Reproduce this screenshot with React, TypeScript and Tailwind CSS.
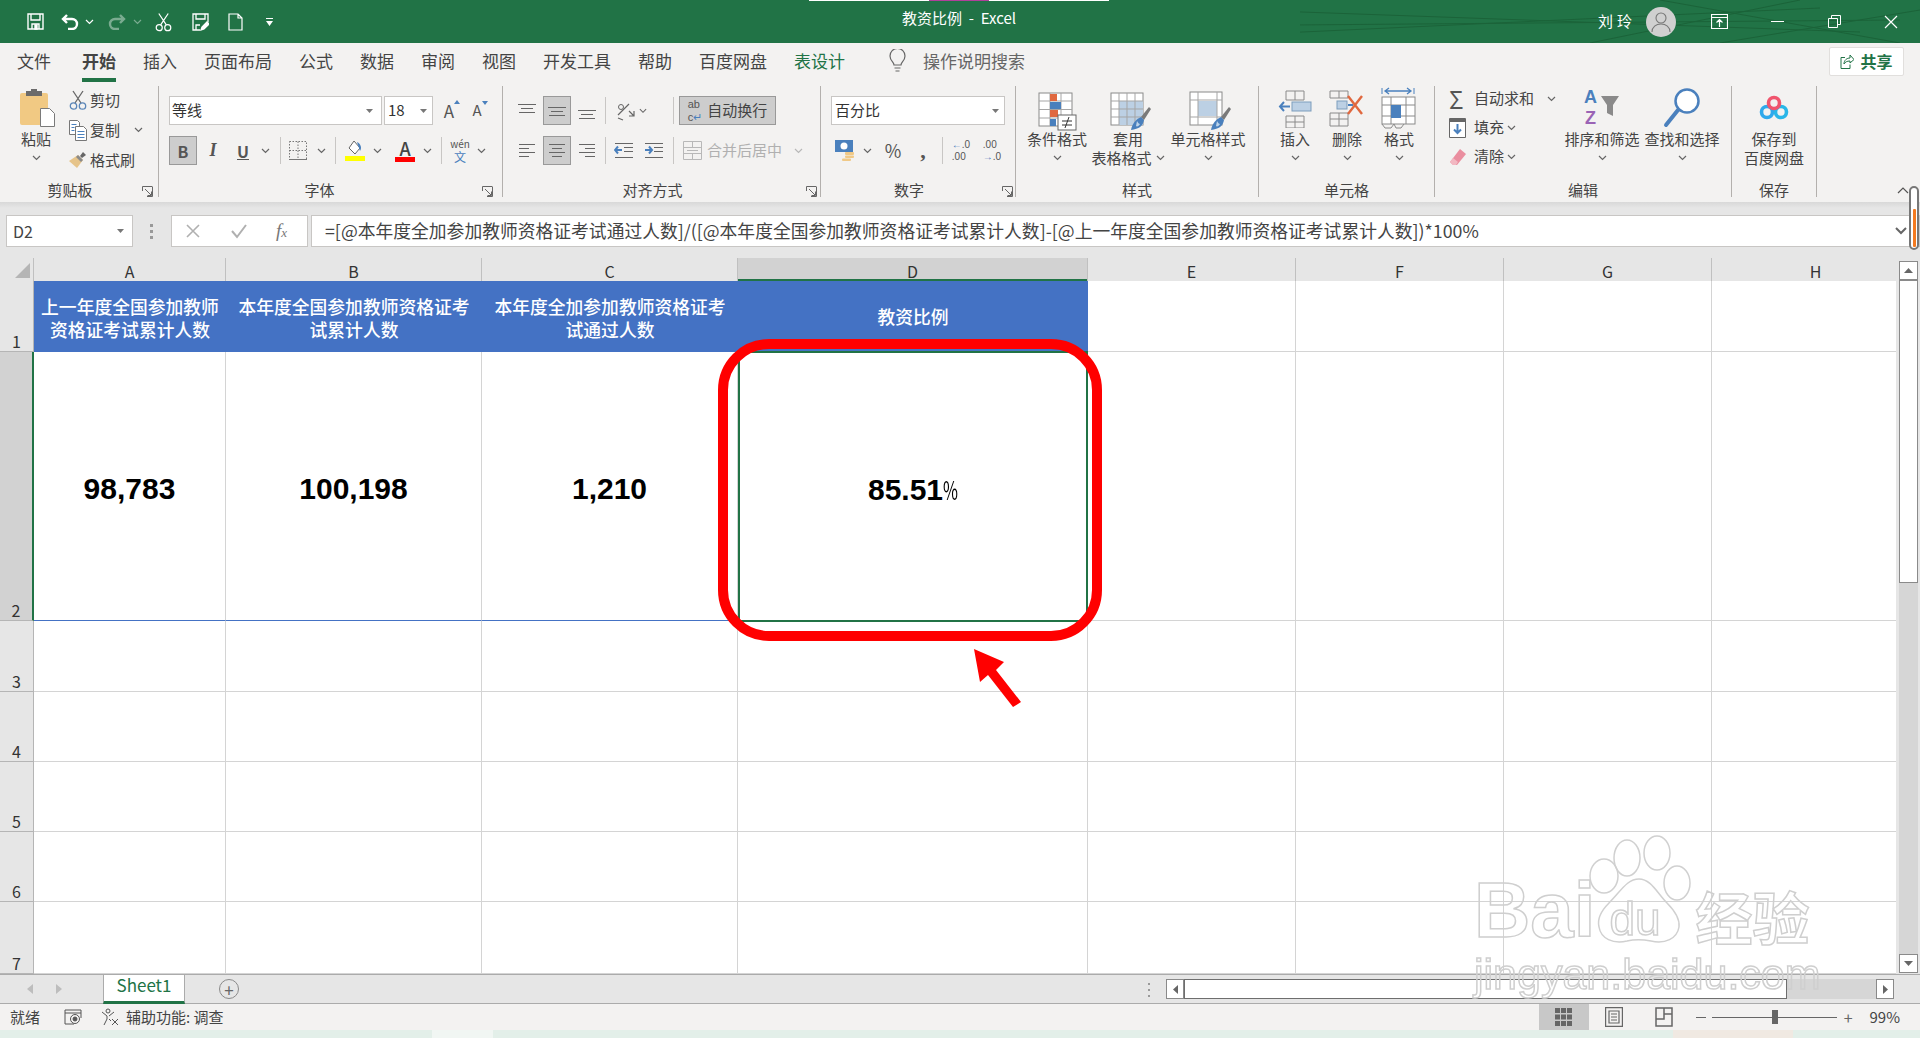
import type { ReactNode } from "react";

const Chev = ({ className = "", color = "#666" }: { className?: string; color?: string }) => (
  <svg width="9" height="6" viewBox="0 0 9 6" className={className} fill="none" stroke={color} strokeWidth="1.2">
    <path d="M1 1l3.5 3.5L8 1" />
  </svg>
);

const Tri = () => (
  <svg width="7" height="4" viewBox="0 0 7 4" fill="#777">
    <path d="M0 0h7L3.5 4z" />
  </svg>
);

// fixed width slot, most ribbon controls sit in one of these
const Slot = ({ className = "", children }: { className?: string; children?: ReactNode }) => (
  <span className={"flex h-full shrink-0 items-center justify-center " + className}>{children}</span>
);

const Sep = ({ className = "" }: { className?: string }) => (
  <span className={"h-[27px] w-px shrink-0 bg-[#c8c6c4] " + className} />
);

const Launcher = () => (
  <svg width="11" height="11" viewBox="0 0 11 11" fill="none" stroke="#666" className="ml-auto mt-[3px]">
    <path d="M.5 5V.5H10M.5 .5" />
    <path d="M10.5 .5V10.5H5M3 3l6 6M5.5 9.5h4v-4" />
  </svg>
);

const Group = ({
  className,
  label,
  children,
  launcher,
}: {
  className: string;
  label: string;
  children: ReactNode;
  launcher?: string;
}) => (
  <div className={"flex h-[111px] shrink-0 flex-col border-r border-[#b3b0ad] " + className}>
    <div className="h-[96px] shrink-0">{children}</div>
    <div className="flex h-[15px] items-center text-[15px] leading-[15px] text-[#444]">
      <span className="flex-1 text-center">{label}</span>
      {launcher && <span className={"flex shrink-0 " + launcher}><Launcher /></span>}
    </div>
  </div>
);

const Big = ({ className, icon, lines, chevInline }: { className: string; icon: ReactNode; lines: string[]; chevInline?: boolean }) => (
  <div className={"flex shrink-0 flex-col items-center text-[15px] leading-[19px] text-[#444] " + className}>
    <div className="flex h-[43px] w-full items-center justify-center">{icon}</div>
    {lines.map((l, i) => (
      <div key={l} className="flex items-center whitespace-nowrap">
        {l}
        {chevInline && i === 1 && <Chev className="ml-[4px]" />}
      </div>
    ))}
    {!chevInline && lines.length === 1 && (
      <div className="flex h-[19px] items-center">
        <Chev />
      </div>
    )}
  </div>
);

const AlignIcon = ({ kind }: { kind: "top" | "mid" | "bot" | "l" | "c" | "r" }) => {
  const y = kind === "top" ? 2 : kind === "bot" ? 8 : 5;
  if (kind === "top" || kind === "mid" || kind === "bot") {
    return (
      <svg width="18" height="17" viewBox="0 0 18 17" stroke="#666" strokeWidth="1">
        <path d={`M0 ${y + 0.5}h18M3 ${y + 4.5}h12M1 ${y + 8.5}h16`} />
      </svg>
    );
  }
  const d =
    kind === "l"
      ? "M1 2.5h16M1 6.5h10M1 10.5h16M1 14.5h10"
      : kind === "c"
        ? "M1 2.5h16M4 6.5h10M1 10.5h16M4 14.5h10"
        : "M1 2.5h16M7 6.5h10M1 10.5h16M7 14.5h10";
  return (
    <svg width="18" height="17" viewBox="0 0 18 17" stroke="#666" strokeWidth="1">
      <path d={d} />
    </svg>
  );
};

const Pressed = ({ className = "", children }: { className?: string; children: ReactNode }) => (
  <span className={"flex h-[29px] shrink-0 items-center justify-center border border-[#999] bg-[#cdcdcd] " + className}>
    {children}
  </span>
);

const ScissorsIcon = ({ stroke = "#5b86b8", size = 18 }: { stroke?: string; size?: number }) => (
  <svg width={size} height={size + 2} viewBox="0 0 18 20" fill="none" strokeWidth="1.3">
    <path d="M4 1l8 12M14 1L6 13" stroke="#666" />
    <circle cx="4.5" cy="16" r="3.2" stroke={stroke} />
    <circle cx="13.5" cy="16" r="3.2" stroke={stroke} />
  </svg>
);

// the three style icons sit a little lower and to the right of their box
const GridIcon = ({ children }: { children: ReactNode }) => (
  <svg width="46" height="42" viewBox="-2 -4 46 42" fill="none" className="overflow-visible">
    {children}
  </svg>
);

const Condition = () => (
  <GridIcon>
    <rect x="3" y="2" width="33" height="33" fill="#fff" stroke="#8a8a8a" />
    <path d="M3 10h33M3 18.500h33M3 27h33M14 2v33M25 2v33" stroke="#a5a5a5" />
    <rect x="14" y="3" width="7" height="7" fill="#e0683f" />
    <rect x="14" y="11" width="11" height="7" fill="#4a80bd" />
    <rect x="14" y="19" width="8" height="7" fill="#e0683f" />
    <rect x="14" y="28" width="6" height="7" fill="#4a80bd" />
    <rect x="22" y="24" width="18" height="15" fill="#fff" stroke="#666" />
    <path d="M26 30h10M26 34h10M33 26l-4 11" stroke="#333" />
  </GridIcon>
);

const Brush = () => (
  <g>
    <path d="M34 26l8-10 2 2-7 11z" fill="#7a7a7a" />
    <path d="M24 39c1-6 5-11 10-13l3 3c-1 6-5 9-13 10z" fill="#4a80bd" />
    <path d="M30 30c1 2 2 3 3 3-1 2-3 3-4 2z" fill="#bcd3ea" />
  </g>
);

const TableFmt = () => (
  <GridIcon>
    <rect x="4" y="2" width="32" height="32" fill="#fff" stroke="#8a8a8a" />
    <rect x="12" y="10" width="24" height="24" fill="#bcd0e4" />
    <path d="M4 10h32M4 18h32M4 26h32M12 2v32M20 2v32M28 2v32" stroke="#a5a5a5" />
    <Brush />
  </GridIcon>
);

const CellFmt = () => (
  <GridIcon>
    <rect x="3" y="1" width="32" height="33" fill="#fff" stroke="#8a8a8a" />
    <rect x="11" y="10" width="19" height="15" fill="#bcd0e4" />
    <path d="M3 9h32M3 26h32M11 1v33M30 1v33" stroke="#a5a5a5" />
    <Brush />
  </GridIcon>
);

const Insert = () => (
  <svg width="34" height="40" viewBox="0 0 34 40" fill="none" stroke="#8a8a8a">
    <path d="M8 3h18v9H8zM17 3v9M8 28h18v12H8zM17 28v12M8 34h18" />
    <rect x="14" y="14" width="19" height="9" fill="#bcd0e4" stroke="#7d9dbd" />
    <path d="M12 18.500H2M6 14l-4 4.500L6 23" stroke="#4a80bd" strokeWidth="2" />
  </svg>
);

const Del = () => (
  <svg width="36" height="40" viewBox="0 0 36 40" fill="none" stroke="#8a8a8a">
    <path d="M1 3h18v7H1zM10 3v7M1 25h18v13H1zM10 25v13M1 31h18" />
    <rect x="8" y="13" width="10" height="8" fill="#bcd0e4" stroke="#7d9dbd" />
    <path d="M19 17h5" stroke="#4a80bd" strokeWidth="2" />
    <path d="M19 8l14 18M33 8L19 26" stroke="#e0683f" strokeWidth="2.400" />
  </svg>
);

const Format = () => (
  <svg width="36" height="42" viewBox="0 0 36 42" fill="none" stroke="#8a8a8a">
    <path d="M1 1v6M33 1v6" stroke="#4a80bd" />
    <path d="M4 4h26M8 1L4 4l4 3M26 1l4 3-4 3" stroke="#4a80bd" strokeWidth="1.300" />
    <rect x="1" y="10" width="33" height="27" fill="#fff" />
    <path d="M1 18h33M1 29h33M10 10v27M25 10v27" />
    <rect x="10" y="18" width="10" height="13" fill="#4a80bd" stroke="none" />
    <path d="M1 37l3 4h6l3-4M13 37l2 4h5l3-4" />
  </svg>
);

const SortIcon = () => (
  <div className="flex items-center">
    <div className="flex flex-col items-center [font-family:'Liberation_Sans',sans-serif] text-[18px] font-bold leading-[21px]">
      <span className="text-[#4a80bd]">A</span>
      <span className="text-[#9a63b5]">Z</span>
    </div>
    <svg width="20" height="22" viewBox="0 0 20 22" className="mb-[4px] ml-[3px]" fill="#8a8a8a">
      <path d="M1 1h18l-6 9v11l-6-3v-8z" />
    </svg>
  </div>
);

const FindIcon = () => (
  <svg width="38" height="42" viewBox="0 0 38 42" fill="none">
    <circle cx="24" cy="14" r="11.500" fill="#fff" stroke="#4a80bd" strokeWidth="2.500" />
    <path d="M15 23L3 38" stroke="#4a80bd" strokeWidth="4" strokeLinecap="round" />
  </svg>
);

const CloudIcon = () => (
  <svg width="30" height="26" viewBox="0 0 30 26" fill="none" strokeWidth="3.600">
    <circle cx="8" cy="17" r="5.500" stroke="#2fa9ec" />
    <circle cx="22" cy="17" r="5.500" stroke="#29b6e8" />
    <circle cx="15" cy="8" r="5.500" stroke="#f0556e" />
  </svg>
);

const Paste = () => (
  <svg width="36" height="40" viewBox="0 0 36 40">
    <rect x="0" y="5" width="28" height="32" rx="2" fill="#f1c983" />
    <path d="M6 3h5V1h6v2h5v5H6z" fill="#6b6b6b" />
    <path d="M20.500 20.500h9l5 5v13h-14z" fill="#fff" stroke="#7a7a7a" />
  </svg>
);

const CopyIcon = () => (
  <svg width="18" height="21" viewBox="0 0 18 21" fill="#fff" stroke="#777">
    <path d="M.5.5h8l2 2v12H.500z" />
    <path d="M6.500 6.500h8l3 3v11h-11z" />
    <path d="M2.500 4.500h5M2.500 7.500h3M2.500 10.500h3M8.500 11.500h7M8.500 14.500h7M8.500 17.500h7" stroke="#4a80bd" />
  </svg>
);

const PainterIcon = () => (
  <svg width="18" height="18" viewBox="0 0 18 18">
    <path d="M11 5l3-4 3 3-4 3z" fill="#666" />
    <path d="M9 4l5 5-6 8-8-7z" fill="#e6c48a" />
    <path d="M9 4l5 5-2 2-5-5z" fill="#8a8a8a" />
  </svg>
);

const Row = ({ children, className = "" }: { children: ReactNode; className?: string }) => (
  <div className={"flex h-[29px] items-center " + className}>{children}</div>
);

const Ribbon = () => (
  <div className="flex h-[120px] bg-[#f3f2f1] pt-[4px]">
    <Group className="w-[159px]" label="剪贴板" launcher="w-[18px] pr-[5px]">
      <div className="flex text-[15px] text-[#444]">
        <div className="flex w-[66px] flex-col items-center pl-[6px]">
          <div className="ml-[3px] flex h-[42px] items-end">
            <Paste />
          </div>
          <span className="mt-[1px] leading-[19px]">粘贴</span>
          <Chev className="mt-[7px]" />
        </div>
        <div className="-mt-[1px] flex flex-col">
          {[
            ["剪切", <ScissorsIcon key="a" />, false],
            ["复制", <CopyIcon key="b" />, true],
            ["格式刷", <PainterIcon key="c" />, false],
          ].map(([t, icon, ch]) => (
            <div key={t as string} className="flex h-[30px] items-center">
              <span className="flex w-[24px] justify-center">{icon as ReactNode}</span>
              <span>{t as string}</span>
              {ch ? <Chev className="ml-[14px]" /> : null}
            </div>
          ))}
        </div>
      </div>
    </Group>

    <Group className="w-[344px]" label="字体" launcher="w-[22px] pr-[9px]">
      <div className="pl-[10px] pt-[10px]">
        <Row>
          <span className="flex h-full w-[213px] items-center justify-between border border-[#c8c6c4] bg-white pl-[2px] pr-[8px] text-[15px] text-[#333]">
            等线
            <Tri />
          </span>
          <span className="ml-[2px] flex h-full w-[49px] items-center justify-between border border-[#c8c6c4] bg-white pl-[3px] pr-[5px] text-[15px] text-[#333]">
            18
            <Tri />
          </span>
          <Slot className="w-[32px] text-[17px] text-[#555]">
            <span className="relative">
              A
              <span className="absolute right-[-6px] top-[2px] h-0 w-0 border-x-[3px] border-b-[4px] border-x-transparent border-b-[#4a80bd]" />
            </span>
          </Slot>
          <Slot className="w-[24px] text-[15px] text-[#555]">
            <span className="relative">
              A
              <span className="absolute right-[-6px] top-[2px] h-0 w-0 border-x-[3px] border-t-[4px] border-x-transparent border-t-[#4a80bd]" />
            </span>
          </Slot>
        </Row>
        <Row className="mt-[11px] text-[#555]">
          <Pressed className="w-[28px] text-[16px] font-bold">B</Pressed>
          <Slot className="ml-[2px] w-[28px] font-['Liberation_Serif'] text-[18px] font-bold italic">I</Slot>
          <Slot className="ml-[2px] w-[28px] text-[16px] font-bold underline">U</Slot>
          <Slot className="w-[16px]"><Chev /></Slot>
          <Sep className="ml-[7px]" />
          <Slot className="w-[34px]">
            <svg width="18" height="19" viewBox="0 0 18 19" fill="none" stroke="#777" strokeDasharray="1.500 1.500">
              <path d="M.5.5h17v18H.500zM9 .500v18M.500 9.500h17" />
              <path d="M0 18.500h18" strokeDasharray="none" />
            </svg>
          </Slot>
          <Slot className="w-[12px]"><Chev /></Slot>
          <Sep className="ml-[8px]" />
          <Slot className="ml-[4px] w-[30px]">
            <svg width="20" height="21" viewBox="0 0 20 21">
              <path d="M9 1l6 7-5 6-6-6z" fill="#fff" stroke="#666" />
              <path d="M12 2c4 2 5 6 3 9z" fill="#4a80bd" />
              <rect y="16" width="20" height="5" fill="#ffff00" />
            </svg>
          </Slot>
          <Slot className="ml-[1px] w-[12px]"><Chev /></Slot>
          <Slot className="ml-[8px] w-[28px]">
            <span className="flex flex-col items-center">
              <span className="h-[16px] text-[18px] font-medium leading-[16px] text-[#444]">A</span>
              <span className="mt-[1px] h-[5px] w-[20px] bg-[#ff0000]" />
            </span>
          </Slot>
          <Slot className="ml-[2px] w-[12px]"><Chev /></Slot>
          <Sep className="ml-[8px]" />
          <Slot className="ml-[3px] w-[30px]">
            <span className="flex flex-col items-center text-[#4a80bd]">
              <span className="h-[12px] text-[10px] leading-[12px] text-[#555]">wén</span>
              <span className="h-[14px] text-[12px] leading-[14px]">文</span>
            </span>
          </Slot>
          <Slot className="w-[13px]"><Chev /></Slot>
        </Row>
      </div>
    </Group>

    <Group className="w-[318px]" label="对齐方式" launcher="w-[18px] pr-[3px]">
      <div className="pl-[10px] pt-[10px]">
        <Row>
          <Slot className="w-[28px]"><AlignIcon kind="top" /></Slot>
          <Pressed className="ml-[2px] w-[28px]"><AlignIcon kind="mid" /></Pressed>
          <Slot className="ml-[2px] w-[28px]"><AlignIcon kind="bot" /></Slot>
          <Sep className="ml-[4px]" />
          <Slot className="ml-[5px] w-[28px]">
            <svg width="20" height="20" viewBox="0 0 20 20" fill="none" stroke="#666">
              <path d="M3 14L14 3M3 17l5 2M14 10l5 5M19 10v5h-5" strokeWidth="1.200" />
              <circle cx="6" cy="6" r="2.500" />
              <path d="M8 9l-3 3" />
            </svg>
          </Slot>
          <Slot className="w-[8px]"><Chev /></Slot>
          <Sep className="ml-[26px]" />
          <Pressed className="ml-[5px] w-[97px] gap-[5px] text-[15px] text-[#444]">
            <span className="flex flex-col [font-family:'Liberation_Sans',sans-serif] text-[11px] leading-[13px] text-[#555]">
              <span>ab</span>
              <span>c<span className="text-[#4a80bd]">↵</span></span>
            </span>
            自动换行
          </Pressed>
        </Row>
        <Row className="mt-[11px]">
          <Slot className="w-[28px]"><AlignIcon kind="l" /></Slot>
          <Pressed className="ml-[2px] w-[28px]"><AlignIcon kind="c" /></Pressed>
          <Slot className="ml-[2px] w-[28px]"><AlignIcon kind="r" /></Slot>
          <Sep className="ml-[4px]" />
          <Slot className="ml-[4px] w-[28px]">
            <svg width="20" height="17" viewBox="0 0 20 17" fill="none" stroke="#666">
              <path d="M1 1.500h18M10 5.500h9M10 9.500h9M1 15.500h18" />
              <path d="M8 8H1M4 4.500L1 8l3 3.500" stroke="#4a80bd" strokeWidth="2" />
            </svg>
          </Slot>
          <Slot className="ml-[2px] w-[28px]">
            <svg width="20" height="17" viewBox="0 0 20 17" fill="none" stroke="#666">
              <path d="M1 1.500h18M10 5.500h9M10 9.500h9M1 15.500h18" />
              <path d="M1 8h7M5 4.500L8 8l-3 3.500" stroke="#4a80bd" strokeWidth="2" />
            </svg>
          </Slot>
          <Sep className="ml-[5px]" />
          <span className="ml-[5px] flex h-full items-center text-[15px] text-[#b0b0b0]">
            <svg width="19" height="19" viewBox="0 0 19 19" fill="none" stroke="#b8b8b8" className="ml-[4px]">
              <path d="M.5.5h18v18H.500zM.500 6.500h18M.500 12.500h18M9.500.500v6M9.500 12.500v6M4 9.500h11" />
            </svg>
            <span className="ml-[5px]">合并后居中</span>
            <Chev className="ml-[12px]" color="#b8b8b8" />
          </span>
        </Row>
      </div>
    </Group>

    <Group className="w-[195px]" label="数字" launcher="w-[18px] pr-[2px]">
      <div className="pl-[10px] pt-[10px]">
        <Row>
          <span className="flex h-full w-[174px] items-center justify-between border border-[#c8c6c4] bg-white pl-[3px] pr-[5px] text-[15px] text-[#333]">
            百分比
            <Tri />
          </span>
        </Row>
        <Row className="mt-[11px] text-[#555]">
          <Slot className="w-[28px]">
            <svg width="20" height="21" viewBox="0 0 20 21">
              <rect width="18" height="12" fill="#4a80bd" />
              <circle cx="9" cy="6" r="3.500" fill="#fff" />
              <rect x="10" y="12" width="9" height="3" rx="1" fill="#f0c987" />
              <rect x="10" y="15.500" width="9" height="2.500" rx="1" fill="#f0c987" />
              <rect x="7" y="18.500" width="9" height="2.500" rx="1" fill="#f0c987" />
            </svg>
          </Slot>
          <Slot className="ml-[2px] w-[12px]"><Chev /></Slot>
          <Slot className="ml-[6px] w-[28px] text-[18px]">%</Slot>
          <Slot className="ml-[2px] w-[28px] font-['Liberation_Serif'] text-[22px] font-bold">,</Slot>
          <Sep className="ml-[5px]" />
          <Slot className="ml-[4px] w-[28px]">
            <span className="[font-family:'Liberation_Sans',sans-serif] text-[10px] leading-[12px] text-[#555]">
              <span className="text-[#4a80bd]">←</span>.0
              <br />.00
            </span>
          </Slot>
          <Slot className="ml-[3px] w-[28px]">
            <span className="[font-family:'Liberation_Sans',sans-serif] text-[10px] leading-[12px] text-[#555]">
              .00
              <br />
              <span className="text-[#4a80bd]">→</span>.0
            </span>
          </Slot>
        </Row>
      </div>
    </Group>

    <Group className="w-[243px]" label="样式">
      <div className="flex pl-[6px]">
        <Big className="w-[70px]" icon={<Condition />} lines={["条件格式"]} />
        <Big className="w-[72px]" icon={<TableFmt />} lines={["套用", "表格格式"]} chevInline />
        <Big className="w-[88px]" icon={<CellFmt />} lines={["单元格样式"]} />
      </div>
    </Group>

    <Group className="w-[176px]" label="单元格">
      <div className="flex pl-[10px]">
        <Big className="w-[52px]" icon={<Insert />} lines={["插入"]} />
        <Big className="w-[52px]" icon={<Del />} lines={["删除"]} />
        <Big className="w-[52px]" icon={<Format />} lines={["格式"]} />
      </div>
    </Group>

    <Group className="w-[297px]" label="编辑">
      <div className="flex">
        <div className="-mt-[2px] flex w-[129px] flex-col pl-[14px] text-[15px] text-[#444]">
          <div className="flex h-[29px] items-center">
            <span className="flex w-[25px] text-[24px] leading-none text-[#555]">Σ</span>
            自动求和
            <Chev className="ml-[13px]" />
          </div>
          <div className="flex h-[29px] items-center">
            <span className="flex w-[25px]">
              <svg width="18" height="20" viewBox="0 0 18 20" fill="#fff" stroke="#666">
                <path d="M.5.5h16v19H.500z" />
                <path d="M.500 1.500h16v2H.500z" fill="#666" />
                <path d="M8.500 6v9M5 11.500l3.500 3.500 3.500-3.500" stroke="#4a80bd" strokeWidth="2" fill="none" />
              </svg>
            </span>
            填充
            <Chev className="ml-[3px]" />
          </div>
          <div className="flex h-[29px] items-center">
            <span className="flex w-[25px]">
              <svg width="18" height="18" viewBox="0 0 18 18">
                <path d="M11 1l6 5-9 11H4l-3-3z" fill="#ea8e9f" />
                <path d="M1 14l3-4 5 4-2 3H4z" fill="#f2b8c2" />
              </svg>
            </span>
            清除
            <Chev className="ml-[3px]" />
          </div>
        </div>
        <Big className="w-[76px]" icon={<SortIcon />} lines={["排序和筛选"]} />
        <Big className="ml-[3px] w-[78px]" icon={<FindIcon />} lines={["查找和选择"]} />
      </div>
    </Group>

    <Group className="w-[85px]" label="保存">
      <Big className="w-[84px]" icon={<CloudIcon />} lines={["保存到", "百度网盘"]} />
    </Group>

    <div className="flex h-[111px] flex-1 items-end justify-end pb-[3px] pr-[11px]">
      <svg width="12" height="7" viewBox="0 0 12 7" fill="none" stroke="#555" strokeWidth="1.200">
        <path d="M1 6l5-5 5 5" />
      </svg>
    </div>
  </div>
);

const TitleBar = () => (
  <div className="relative flex h-[43px] items-center overflow-hidden bg-[#217346] text-white">
    <span className="absolute left-[809px] top-0 flex h-px w-[300px] bg-white">
      <span className="ml-[120px] h-px w-[60px] bg-[#b0409a]" />
    </span>
    <svg className="absolute left-[1300px] top-0 h-[43px] w-[620px]" viewBox="0 0 620 43" fill="none" stroke="#1b6339">
      <path d="M-250 3L560 32M-130 26L600 20M-170 40L520 8M290 43L500 0M360 0L600 43M420 43L620 10" />
    </svg>
    <div className="relative flex w-[900px] shrink-0 items-center">
      <Slot className="ml-[26px] w-[18px]">
        <svg width="17" height="17" viewBox="0 0 17 17" fill="none" stroke="#fff" strokeWidth="1.400">
          <path d="M1 1h15v15H1zM4 1v6h9V1M5 16v-5h7v5" />
          <path d="M8 12h2v4H8z" fill="#fff" />
        </svg>
      </Slot>
      <Slot className="ml-[17px] w-[20px]">
        <svg width="20" height="17" viewBox="0 0 20 17" fill="none" stroke="#fff" strokeWidth="2.400">
          <path d="M6 2L2 6l4 4M2 6h9a5 5 0 010 10H7" />
        </svg>
      </Slot>
      <Slot className="ml-[3px] w-[10px]"><Chev color="#fff" /></Slot>
      <Slot className="ml-[12px] w-[20px] opacity-40">
        <svg width="20" height="17" viewBox="0 0 20 17" fill="none" stroke="#fff" strokeWidth="2.400">
          <path d="M14 2l4 4-4 4M18 6H9a5 5 0 000 10h4" />
        </svg>
      </Slot>
      <Slot className="ml-[6px] w-[10px] opacity-40"><Chev color="#fff" /></Slot>
      <Slot className="ml-[12px] w-[18px]">
        <svg width="17" height="22" viewBox="0 0 18 20" fill="none" stroke="#fff" strokeWidth="1.300">
          <path d="M4 1l8 12M14 1L6 13" />
          <circle cx="4.500" cy="16" r="3.200" />
          <circle cx="13.500" cy="16" r="3.200" />
        </svg>
      </Slot>
      <Slot className="ml-[19px] w-[18px]">
        <svg width="17" height="18" viewBox="0 0 17 18" fill="none" stroke="#fff" strokeWidth="1.300">
          <path d="M8 17H1V1h15v8M4 1v5h9V1M4 17v-5h4" />
          <path d="M9 17l1-3 5-5 2 2-5 5z" fill="#fff" />
        </svg>
      </Slot>
      <Slot className="ml-[18px] w-[16px]">
        <svg width="15" height="18" viewBox="0 0 15 18" fill="none" stroke="#fff" strokeWidth="1.200">
          <path d="M1 1h9l4 4v12H1zM10 1v4h4" />
        </svg>
      </Slot>
      <Slot className="ml-[22px] w-[8px]">
        <svg width="7" height="8" viewBox="0 0 7 8" fill="#fff">
          <path d="M0 0h7v1H0zM0 3h7L3.500 8z" />
        </svg>
      </Slot>
    </div>
    <span className="relative w-[118px] shrink-0 whitespace-nowrap pb-[7px] text-center text-[15px]">教资比例&nbsp; - &nbsp;Excel</span>
    <div className="relative flex flex-1 items-center justify-end">
      <span className="text-[15px] tracking-[4px]">刘玲</span>
      <span className="ml-[10px] flex h-[30px] w-[30px] items-center justify-center rounded-full bg-[#d0d0d0]">
        <svg width="20" height="22" viewBox="0 0 20 22" fill="none" stroke="#777" strokeWidth="1.100">
          <circle cx="10" cy="7" r="5" />
          <path d="M1 21c0-5 4-8 9-8s9 3 9 8" />
        </svg>
      </span>
      <Slot className="ml-[33px] w-[20px]">
        <svg width="17" height="15" viewBox="0 0 17 15" fill="none" stroke="#fff" strokeWidth="1.200">
          <path d="M.5.500h16v14H.500zM.500 3.500h16M8.500 13V6M5.500 8.500l3-3 3 3" />
        </svg>
      </Slot>
      <Slot className="ml-[38px] w-[20px]">
        <span className="h-px w-[13px] bg-white" />
      </Slot>
      <Slot className="ml-[37px] w-[20px]">
        <svg width="13" height="13" viewBox="0 0 13 13" fill="none" stroke="#fff">
          <path d="M.5 3.500h9v9h-9zM3.500 3.500v-3h9v9h-3" />
        </svg>
      </Slot>
      <Slot className="ml-[37px] mr-[19px] w-[20px]">
        <svg width="14" height="14" viewBox="0 0 14 14" fill="none" stroke="#fff" strokeWidth="1.200">
          <path d="M1 1l12 12M13 1L1 13" />
        </svg>
      </Slot>
    </div>
  </div>
);

const tabs = ["文件", "开始", "插入", "页面布局", "公式", "数据", "审阅", "视图", "开发工具", "帮助", "百度网盘"];

const TabRow = () => (
  <div className="flex h-[39px] items-center gap-[27px] bg-[#f3f2f1] pb-[3px] pl-[17px] text-[17px] text-[#444]">
    {tabs.map((t) =>
      t === "开始" ? (
        <span key={t} className="relative ml-[4px] font-bold">
          {t}
          <span className="absolute bottom-[-8px] left-0 h-[4px] w-full bg-[#217346]" />
        </span>
      ) : (
        <span key={t}>{t}</span>
      ),
    )}
    <span className="text-[#217346]">表设计</span>
    <svg width="17" height="24" viewBox="0 0 17 24" fill="none" stroke="#666" className="ml-[17px]" strokeWidth="1.200">
      <path d="M5 16c0-3-4-4-4-9a7.500 7.500 0 0115 0c0 5-4 6-4 9zM5.500 19h6M6.500 22h4" />
    </svg>
    <span className="ml-[-10px] text-[#666]">操作说明搜索</span>
    <span className="ml-auto mr-[16px] flex h-[29px] w-[75px] items-center justify-center gap-[6px] rounded-[2px] border border-[#e1dfdd] bg-white text-[16px] font-bold text-[#217346]">
      <svg width="14" height="15" viewBox="0 0 14 15" fill="none" stroke="#217346">
        <path d="M5 3.500H1v11h9v-4M4 10c0-4 3-6 6-6V1l4 4.500L10 9V7c-3 0-5 1-6 3z" />
      </svg>
      共享
    </span>
  </div>
);

const FormulaBar = () => (
  <div className="flex h-[56px] items-start bg-[#e6e6e6] [background-image:linear-gradient(#d8d8d8,#e6e6e6_6px)] pl-[6px] pt-[13px]">
    <span className="flex h-[32px] w-[127px] items-center justify-between border border-[#c8c6c4] bg-white pl-[6px] pr-[8px] text-[16px] text-[#444]">
      D2
      <Tri />
    </span>
    <span className="ml-[17px] mr-[18px] flex h-[32px] w-[3px] flex-col justify-center gap-[3px]">
      <span className="h-[3px] w-[3px] bg-[#999]" />
      <span className="h-[3px] w-[3px] bg-[#999]" />
      <span className="h-[3px] w-[3px] bg-[#999]" />
    </span>
    <span className="flex h-[32px] w-[137px] items-center border border-[#c8c6c4] bg-white pl-[13px] text-[#a6a6a6]">
      <svg width="16" height="16" viewBox="0 0 16 16" fill="none" stroke="#b0b0b0" strokeWidth="1.600">
        <path d="M2 2l12 12M14 2L2 14" />
      </svg>
      <svg width="18" height="16" viewBox="0 0 18 16" fill="none" stroke="#b0b0b0" strokeWidth="2" className="ml-[29px]">
        <path d="M2 8l5 6L16 2" />
      </svg>
      <span className="ml-[28px] font-['Liberation_Serif'] text-[19px] italic text-[#777]">
        f<span className="text-[13px]">x</span>
      </span>
    </span>
    <span className="ml-[3px] flex h-[32px] flex-1 items-center justify-between overflow-hidden border border-[#c8c6c4] bg-white pb-[1px] pl-[13px] pr-[12px] text-[17.800px] text-[#444]">
      <span className="whitespace-nowrap">
        =[@本年度全加参加教师资格证考试通过人数]/([@本年度全国参加教师资格证考试累计人数]-[@上一年度全国参加教师资格证考试累计人数])*100%
      </span>
      <svg width="12" height="8" viewBox="0 0 12 8" fill="none" stroke="#666" strokeWidth="2">
        <path d="M1 1l5 5 5-5" />
      </svg>
    </span>
  </div>
);

const Line = "border-b border-r border-[#d4d4d4]";

const RowHead = ({ n, className = "" }: { n: number; className?: string }) => (
  <div className={"flex items-end justify-center border-b border-r border-[#b5b5b5] text-[16px] leading-[20px] text-[#333] " + className}>
    {n}
  </div>
);

const ColHead = ({ c, className = "" }: { c: string; className?: string }) => (
  <div className={"flex items-end justify-center border-r border-[#c0c0c0] text-[16px] leading-[20px] text-[#333] " + className}>
    {c}
  </div>
);

const HeadCell = ({ children, className = "" }: { children: ReactNode; className?: string }) => (
  <div className={"flex items-center justify-center whitespace-nowrap bg-[#4472c4] text-center text-[17.800px] font-medium leading-[23px] text-white " + className}>
    <span>{children}</span>
  </div>
);

const Value = ({ children }: { children: ReactNode }) => (
  <div className={"flex items-center justify-center border-b border-r border-[#d4d4d4] border-b-[#4472c4] pt-[5px] [font-family:'Liberation_Sans',sans-serif] text-[30px] font-bold text-black"}>
    {children}
  </div>
);

const Sheet = () => (
  <div className="relative h-[716px] overflow-hidden bg-white">
    <div className="grid w-[1920px] grid-cols-[34px_192px_256px_256px_350px_208px_208px_208px_208px] grid-rows-[23px_71px_269px_71px_70px_70px_70px_72px]">
      <div className="flex items-end justify-end border-r border-[#c0c0c0] bg-[#e6e6e6] pb-[3px] pr-[3px]">
        <span className="h-0 w-0 border-b-[15px] border-l-[15px] border-b-[#b5b5b5] border-l-transparent" />
      </div>
      <ColHead c="A" className="bg-[#e6e6e6]" />
      <ColHead c="B" className="bg-[#e6e6e6]" />
      <ColHead c="C" className="bg-[#e6e6e6]" />
      <ColHead c="D" className="bg-[#d2d2d2] shadow-[inset_0_-2px_0_#217346]" />
      <ColHead c="E" className="bg-[#e6e6e6]" />
      <ColHead c="F" className="bg-[#e6e6e6]" />
      <ColHead c="G" className="bg-[#e6e6e6]" />
      <ColHead c="H" className="bg-[#e6e6e6]" />

      <RowHead n={1} className="bg-[#e6e6e6]" />
      <HeadCell className="pt-[2px]">
        上一年度全国参加教师
        <br />
        资格证考试累计人数
      </HeadCell>
      <HeadCell className="pt-[2px]">
        本年度全国参加教师资格证考
        <br />
        试累计人数
      </HeadCell>
      <HeadCell className="pt-[2px]">
        本年度全加参加教师资格证考
        <br />
        试通过人数
      </HeadCell>
      <HeadCell>教资比例</HeadCell>
      <div className={Line} />
      <div className={Line} />
      <div className={Line} />
      <div className={Line} />

      <RowHead n={2} className="border-r-2 border-r-[#217346] bg-[#d2d2d2]" />
      <Value>98,783</Value>
      <Value>100,198</Value>
      <Value>1,210</Value>
      <div className="-my-px flex items-center justify-center border-2 border-[#217346] pt-[6px] [font-family:'Liberation_Sans',sans-serif] text-[30px] font-bold text-black">
        85.51
        <span className="inline-block w-[15px] origin-left scale-x-[0.65] [font-family:'Noto_Sans_CJK_SC',sans-serif] text-[25px] font-normal">%</span>
      </div>
      <div className={Line} />
      <div className={Line} />
      <div className={Line} />
      <div className={Line} />

      {[3, 4, 5, 6, 7].map((n) => (
        <div key={n} className="contents">
          <RowHead n={n} className="bg-[#e6e6e6]" />
          {["A", "B", "C", "D", "E", "F", "G", "H"].map((c) => (
            <div key={c} className={Line} />
          ))}
        </div>
      ))}
    </div>
    <div className="absolute right-0 top-0 flex h-full w-[24px] flex-col items-center bg-[#e6e6e6] pt-[3px]">
      <span className="flex h-[19px] w-[19px] items-center justify-center border border-[#8a8a8a] bg-white">
        <svg width="9" height="5" viewBox="0 0 9 5" fill="#666">
          <path d="M0 5l4.500-5L9 5z" />
        </svg>
      </span>
      <span className="flex w-[19px] flex-1 flex-col bg-[#d6d6d6]">
        <span className="h-[303px] w-full border border-[#8a8a8a] bg-white" />
      </span>
      <span className="mb-[1px] flex h-[19px] w-[19px] items-center justify-center border border-[#8a8a8a] bg-white">
        <svg width="9" height="5" viewBox="0 0 9 5" fill="#666">
          <path d="M0 0l4.500 5L9 0z" />
        </svg>
      </span>
    </div>
  </div>
);

const SheetTabs = () => (
  <div className="flex h-[30px] items-start border-y border-[#ababab] bg-[#e6e6e6]">
    <Slot className="ml-[26px] w-[8px]">
      <svg width="6" height="10" viewBox="0 0 6 10" fill="#bdbdbd"><path d="M6 0L0 5l6 5z" /></svg>
    </Slot>
    <Slot className="ml-[21px] w-[8px]">
      <svg width="6" height="10" viewBox="0 0 6 10" fill="#bdbdbd"><path d="M0 0l6 5-6 5z" /></svg>
    </Slot>
    <span className="ml-[40px] flex h-[29px] w-[82px] items-center justify-center border-x border-b-[3px] border-x-[#ababab] border-b-[#217346] bg-white pb-[8px] text-[17px] leading-[17px] text-[#217346]">
      Sheet1
    </span>
    <span className="ml-[34px] mt-[4px] flex h-[20px] w-[20px] items-center justify-center rounded-full border border-[#8a8a8a] text-[17px] leading-none text-[#666]">
      +
    </span>
    <span className="ml-[909px] mt-[8px] flex h-[14px] w-[3px] flex-col justify-between">
      <span className="h-[2px] w-[2px] bg-[#999]" />
      <span className="h-[2px] w-[2px] bg-[#999]" />
      <span className="h-[2px] w-[2px] bg-[#999]" />
    </span>
    <div className="ml-[15px] mt-[4px] flex h-[20px] w-[728px] bg-[#d6d6d6]">
      <span className="flex h-full w-[18px] items-center justify-center border border-[#8a8a8a] bg-white">
        <svg width="5" height="9" viewBox="0 0 5 9" fill="#666"><path d="M5 0L0 4.500 5 9z" /></svg>
      </span>
      <span className="h-full w-[603px] border border-[#6e6e6e] bg-white" />
      <span className="ml-auto flex h-full w-[18px] items-center justify-center border border-[#8a8a8a] bg-white">
        <svg width="5" height="9" viewBox="0 0 5 9" fill="#666"><path d="M0 0l5 4.500L0 9z" /></svg>
      </span>
    </div>
  </div>
);

const StatusBar = () => (
  <div className="flex h-[26px] items-center bg-[#f3f2f1] text-[15px] text-[#444]">
    <span className="ml-[10px]">就绪</span>
    <svg width="18" height="16" viewBox="0 0 18 16" fill="none" stroke="#555" className="ml-[24px]">
      <path d="M1 1h16v3H1zM1 4v11h9M17 4v5" />
      <circle cx="11" cy="10" r="4.500" />
      <circle cx="11" cy="10" r="2" fill="#555" />
    </svg>
    <svg width="18" height="18" viewBox="0 0 18 18" fill="none" stroke="#555" className="ml-[19px]">
      <circle cx="7" cy="3" r="2" />
      <path d="M1 4l5 4v3l-3 6M13 4L8 8M8 11l2 2M11 11l6 6M17 11l-6 6" />
    </svg>
    <span className="ml-[7px]">辅助功能: 调查</span>
    <div className="ml-auto flex h-full items-center">
      <span className="flex h-full w-[50px] items-center justify-center bg-[#c8c8c8]">
        <svg width="17" height="18" viewBox="0 0 17 18" fill="#666">
          <path d="M0 0h5v5H0zM6 0h5v5H6zM12 0h5v5h-5zM0 6.500h5v5H0zM6 6.500h5v5H6zM12 6.500h5v5h-5zM0 13h5v5H0zM6 13h5v5H6zM12 13h5v5h-5z" />
        </svg>
      </span>
      <span className="flex w-[50px] justify-center">
        <svg width="18" height="20" viewBox="0 0 18 20" fill="none" stroke="#666" strokeWidth="1.200">
          <path d="M.6.600h16.800v18.800H.600zM4 4h10v12H4zM6 7h6M6 10h6M6 13h6" />
        </svg>
      </span>
      <span className="flex w-[50px] justify-center">
        <svg width="18" height="20" viewBox="0 0 18 20" fill="none" stroke="#666" strokeWidth="1.500">
          <path d="M1 1h16v18H1zM1 12h8V1M9 7h8" />
        </svg>
      </span>
      <span className="ml-[7px] h-px w-[10px] bg-[#666]" />
      <span className="ml-[6px] flex h-[9px] w-[125px] items-center">
        <span className="h-px w-[60px] bg-[#666]" />
        <span className="h-[14px] w-[6px] bg-[#666]" />
        <span className="h-px flex-1 bg-[#666]" />
      </span>
      <span className="ml-[7px] text-[16px] leading-none text-[#666]">+</span>
      <span className="ml-[17px] mr-[20px] text-[15px]">99%</span>
    </div>
  </div>
);

const Watermark = () => {
  const stroke = "text-transparent [-webkit-text-stroke:1.500px_#cfcfcf] blur-[0.4px]";
  return (
    <div className="pointer-events-none absolute left-[1474px] top-[835px] flex w-[350px] flex-col">
      <div className="flex h-[115px] items-end">
        <span className={"[font-family:'Liberation_Sans',sans-serif] text-[78px] font-bold leading-[80px] " + stroke}>Bai</span>
        <span className="relative ml-[-6px] h-[115px] w-[112px] shrink-0">
          <svg className="absolute inset-0" width="112" height="115" viewBox="0 0 112 115" fill="none" stroke="#d0d0d0" strokeWidth="1.500">
            <ellipse cx="15" cy="41" rx="14" ry="17" />
            <ellipse cx="38" cy="23" rx="13" ry="18" />
            <ellipse cx="68" cy="18" rx="13" ry="17" />
            <ellipse cx="88" cy="48" rx="13" ry="17" />
            <path d="M50 44c-12 0-18 12-30 24-8 8-12 16-10 24 2 12 14 17 28 14 8-2 14-2 24 0 14 3 26-2 28-14 1-8-4-16-12-24-10-10-16-24-28-24z" />
          </svg>
          <span className={"absolute bottom-[6px] left-[20px] [font-family:'Liberation_Sans',sans-serif] text-[46px] leading-[50px] " + stroke}>du</span>
        </span>
        <span className={"ml-[-6px] font-bold [font-size:57px] leading-[70px] whitespace-nowrap " + stroke}>经验</span>
      </div>
      <span className={"mt-[1px] [font-family:'Liberation_Sans',sans-serif] text-[43px] leading-[46px] whitespace-nowrap " + stroke}>jingyan.baidu.com</span>
    </div>
  );
};

export default function App() {
  return (
    <div className="relative h-[1038px] w-[1920px] overflow-hidden bg-[#e6e6e6] [font-family:'Noto_Sans_CJK_SC','Liberation_Sans',sans-serif]">
      <TitleBar />
      <TabRow />
      <Ribbon />
      <FormulaBar />
      <Sheet />
      <SheetTabs />
      <StatusBar />
      <div className="flex h-[8px] bg-[#e3efe9]">
        <span className="ml-[432px] w-[61px] bg-[#f1f6f3]" />
        <span className="ml-[1180px] w-[120px] bg-[#f0e9e2]" />
      </div>

      {/* red annotation on D2 */}
      <svg className="pointer-events-none absolute left-0 top-0" width="1920" height="1038" viewBox="0 0 1920 1038" fill="none">
        <rect x="723" y="344" width="374" height="292" rx="46" stroke="#ff0000" strokeWidth="10" />
        <path d="M974 649l30 13-8 8 25 32-8 5-25-32-8 7z" fill="#ff0000" />
      </svg>

      <span className="absolute left-[1909px] top-[186px] flex h-[64px] w-[10px] items-end justify-center rounded-[5px] border-2 border-[#777] bg-white pb-px">
        <span className="h-[38px] w-[3px] rounded-[1px] bg-[#f47a20]" />
      </span>

      <Watermark />
    </div>
  );
}
